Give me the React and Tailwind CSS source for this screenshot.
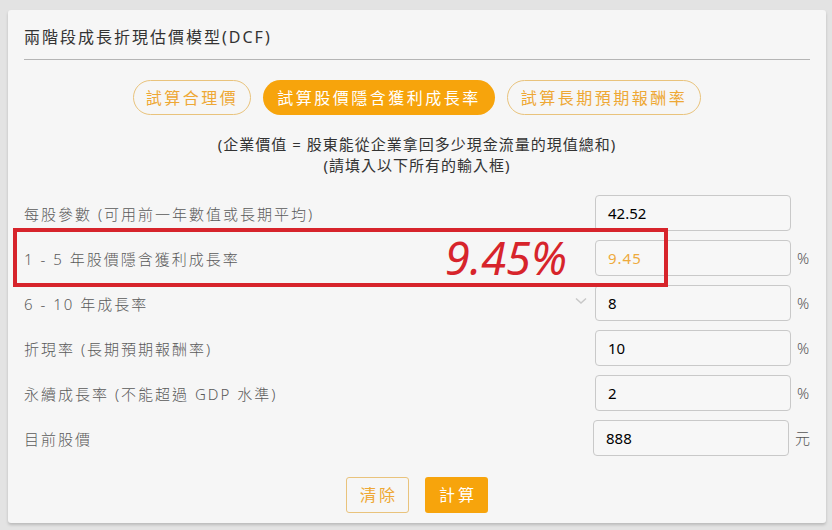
import React from "react";

const font = { fontFamily: '"Noto Sans", "Noto Sans CJK TC", sans-serif' };

function Row({ label, value, unit, valueClass = "text-black", inputClass = "" }) {
  return (
    <div className="flex items-center h-[36px]">
      <div className="flex-1 text-[15px] font-light tracking-[2px] text-[#5a5a5a] pt-[3px]">{label}</div>
      <div className={`w-[196px] h-[36px] border border-[#c9c9c9] rounded-[4px] bg-[#f7f7f7] flex items-center pl-[12px] text-[15px] ${valueClass} ${inputClass}`}>
        {value}
      </div>
      <div className="w-[19px] pl-[6px] text-[15px] font-light text-[#555]">{unit}</div>
    </div>
  );
}

export default function App() {
  return (
    <div className="w-[832px] h-[530px] bg-[#e3e3e3] pt-[10px] pl-[8px]" style={font}>
      <div className="relative w-[818px] h-[513px] bg-[#f6f6f6] rounded-[3px] shadow-[0_2px_3px_rgba(0,0,0,0.18)] px-[16px] pt-[14px]">
        <div className="text-[16px] tracking-[2px] text-[#333] leading-[26px]">兩階段成長折現估價模型(DCF)</div>
        <div className="h-px bg-[#b5b5b5] mt-[9px]" />
        <div className="flex justify-center gap-[12px] mt-[20px]">
          <div className="h-[35px] px-[12px] rounded-full border border-[#e9c37c] text-[#eea835] text-[16px] tracking-[2.5px] flex items-center">試算合理價</div>
          <div className="h-[35px] px-[14px] rounded-full bg-[#f7a40c] text-white text-[16px] tracking-[2.5px] flex items-center">試算股價隱含獲利成長率</div>
          <div className="h-[35px] px-[13px] rounded-full border border-[#e9c37c] text-[#eea835] text-[16px] tracking-[2.5px] flex items-center">試算長期預期報酬率</div>
        </div>
        <div className="mt-[19px] text-center text-[15px] leading-[21px] tracking-[1px] text-[#333]">
          <div>(企業價值 = 股東能從企業拿回多少現金流量的現值總和)</div>
          <div>(請填入以下所有的輸入框)</div>
        </div>
        <div className="mt-[19px] flex flex-col gap-[9px]">
          <Row label="每股參數 (可用前一年數值或長期平均)" value="42.52" unit="" />
          <Row label="1 - 5 年股價隱含獲利成長率" value="9.45" unit="%" valueClass="text-[#eeaa3c] tracking-[1px]" />
          <div className="relative">
            <Row label="6 - 10 年成長率" value="8" unit="%" />
            <svg className="absolute left-[551px] top-[12px]" width="12" height="8" viewBox="0 0 12 8">
              <path d="M1 1.5 L6 6 L11 1.5" fill="none" stroke="#c8c8c8" strokeWidth="1.5" />
            </svg>
          </div>
          <Row label="折現率 (長期預期報酬率)" value="10" unit="%" />
          <Row label="永續成長率 (不能超過 GDP 水準)" value="2" unit="%" />
          <div className="flex items-center h-[36px]">
            <div className="flex-1 text-[15px] font-light tracking-[2px] text-[#5a5a5a] pt-[3px]">目前股價</div>
            <div className="w-[196px] h-[36px] border border-[#c9c9c9] rounded-[4px] bg-[#f7f7f7] flex items-center pl-[12px] text-[15px] text-black">888</div>
            <div className="w-[21px] pl-[6px] text-[15px] font-light text-[#555]">元</div>
          </div>
        </div>
        <div className="flex justify-center gap-[16px] mt-[21px]">
          <div className="w-[63px] h-[36px] border border-[#e9c37c] rounded-[3px] text-[#eea835] text-[16px] tracking-[3px] flex items-center justify-center pl-[3px]">清除</div>
          <div className="w-[63px] h-[36px] bg-[#f7a40c] rounded-[3px] text-white text-[16px] tracking-[3px] flex items-center justify-center pl-[3px]">計算</div>
        </div>
        <div className="absolute left-[5px] top-[218px] w-[655px] h-[59px] border-[4px] border-[#d7242b]">
          <div className="absolute left-[428px] top-[-4px] text-[45px] italic text-[#d7242b] leading-[60px]" style={{ fontFamily: '"Noto Sans", sans-serif' }}>9.45%</div>
        </div>
      </div>
    </div>
  );
}
